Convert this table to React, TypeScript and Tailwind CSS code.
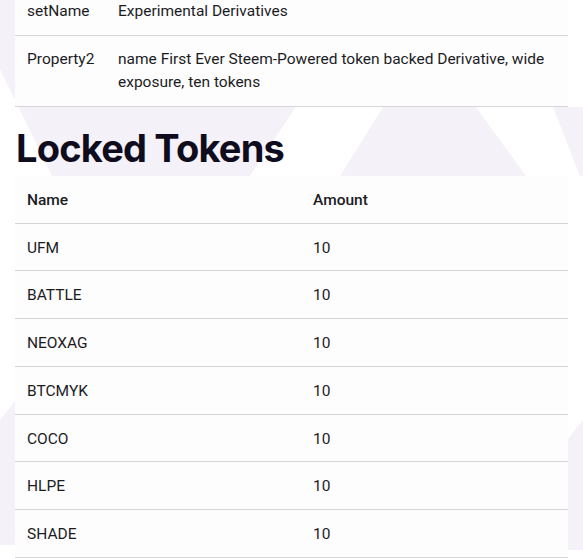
import React from "react";

const tokens = ["UFM", "BATTLE", "NEOXAG", "BTCMYK", "COCO", "HLPE", "SHADE"];

export default function App() {
  return (
    <div className="relative min-h-[558px] overflow-hidden bg-white" style={{ fontFamily: "Roboto, 'Liberation Sans', sans-serif" }}>
      <svg className="absolute inset-0" width="583" height="558" viewBox="0 0 583 558" aria-hidden="true">
        <polygon points="-34,0 367,0 136,347" fill="#f4f1f8" />
        <polygon points="426,38 340,176 526,176" fill="#f4f1f8" />
        <polygon points="553,107 583,107 583,176 580,176" fill="#f4f1f8" />
        <polygon points="0,420 16,400 16,545 0,545" fill="#f4f1f8" />
        <polygon points="583,420 567,440 567,550 583,550" fill="#f4f1f8" />
      </svg>

      <div className="relative -mt-[12px] pl-[15px] pr-[15px] text-[15.5px] text-[#1c1c1e]">
        <div className="bg-[#fdfdfe]">
          <div className="grid grid-cols-[91px_1fr] border-b border-[#d6d6d9] py-3 pl-3 pr-3 leading-[23px]">
            <div>setName</div>
            <div>Experimental Derivatives</div>
          </div>
          <div className="grid grid-cols-[91px_1fr] border-b border-[#d6d6d9] py-3 pl-3 pr-3 leading-[23px]">
            <div>Property2</div>
            <div>name First Ever Steem-Powered token backed Derivative, wide exposure, ten tokens</div>
          </div>
        </div>

        <h2
          className="mt-[17px] mb-[4px] pl-[1px] text-[38px] font-bold leading-[48px] tracking-[-0.8px] text-[#0f0c1e]"
          style={{ fontFamily: "Inter, 'Liberation Sans', sans-serif" }}
        >
          Locked Tokens
        </h2>

        <div className="bg-[#fdfdfe]">
          <div className="grid grid-cols-[286px_1fr] border-b border-[#d6d6d9] pt-[13px] pb-[11px] pl-3 leading-[22.7px] font-medium">
            <div>Name</div>
            <div>Amount</div>
          </div>
          {tokens.map((t) => (
            <div key={t} className="grid grid-cols-[286px_1fr] border-b border-[#d6d6d9] pt-[13px] pb-[11px] pl-3 leading-[22.7px]">
              <div>{t}</div>
              <div>10</div>
            </div>
          ))}
        </div>
      </div>
    </div>
  );
}
